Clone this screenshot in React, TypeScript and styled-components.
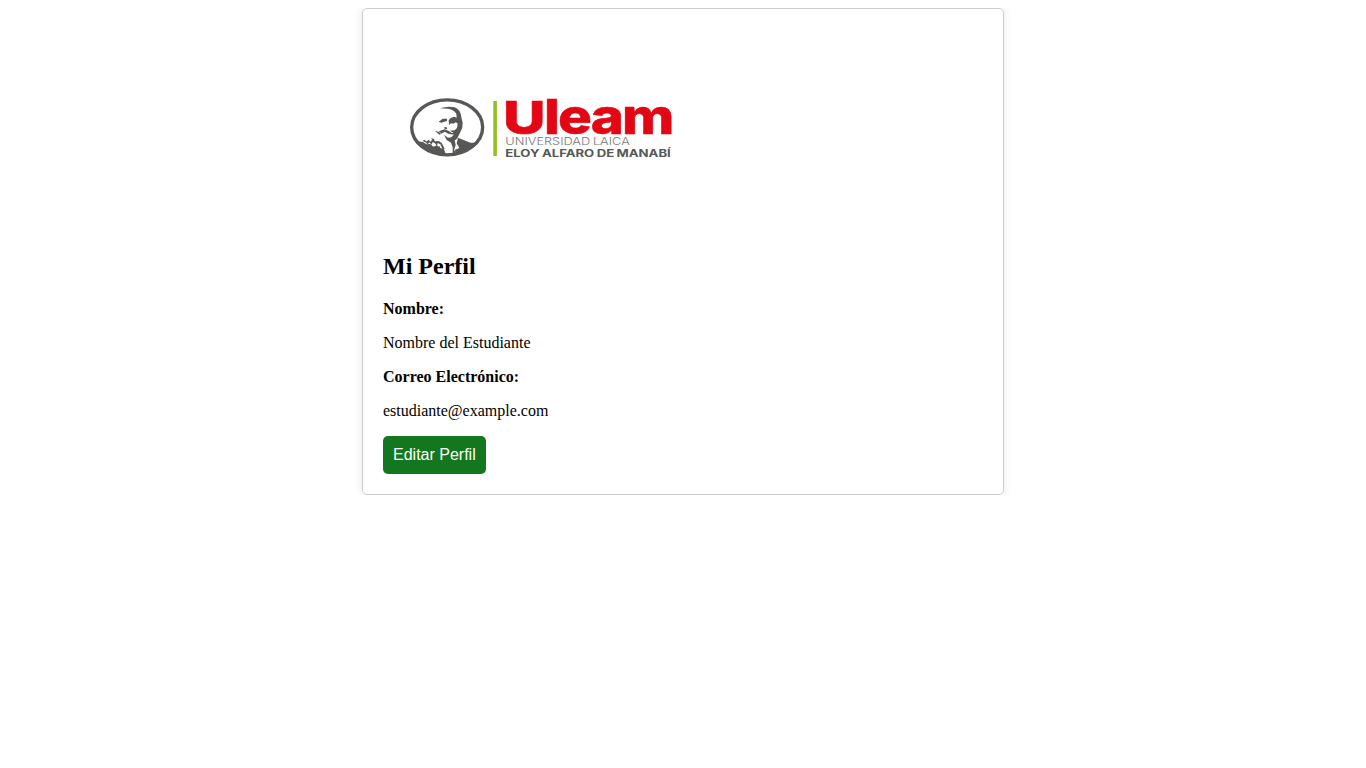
import React from "react";
import styled, { createGlobalStyle } from "styled-components";

const GlobalStyle = createGlobalStyle`
  body {
    margin: 8px;
    background: #fff;
    color: #000;
    font-family: "Liberation Serif", "Times New Roman", serif;
    font-size: 16px;
  }
`;

const Card = styled.main`
  width: 600px;
  margin: 0 auto;
  padding: 20px;
  border: 1px solid #ccc;
  border-radius: 5px;
  box-shadow: 0 0 10px rgba(0, 0, 0, 0.1);
`;

const Logo = styled.svg`
  display: block;
  width: 320px;
  height: 204px;
`;

const Title = styled.h2`
  margin: 20px 0;
  font-size: 24px;
  line-height: 27px;
`;

const Line = styled.p`
  margin: 16px 0;
  line-height: 18px;
`;

const Label = styled(Line)`
  font-weight: bold;
`;

const EditButton = styled.button`
  display: block;
  height: 38px;
  padding: 10px;
  border: none;
  border-radius: 5px;
  background: #13771f;
  color: #fff;
  font-family: "Liberation Sans", Arial, sans-serif;
  font-size: 16px;
  line-height: 18px;
  cursor: pointer;
`;

function UleamLogo() {
  return (
    <Logo viewBox="0 0 320 204" role="img" aria-label="Uleam">
      <g transform="translate(17 61) scale(0.33333)" fill="#575756">
        <ellipse cx="141.500" cy="112" rx="106.500" ry="82.500" fill="none" stroke="#575756" strokeWidth="10" />
        {/* hair and the shaded side of the head */}
        <path d="M120 55 Q142 47 164 52 Q182 59 184 82 L188 98 Q189 114 181 126 L172 145 L163 152 L164 134 L158 127 L149 122 L164 121 L171 114 L173 101 L168 97 L160 101 L153 100 L147 105 L146 91 L151 85 L162 80 L170 83 L169 72 Q164 60 144 56 Z" />
        {/* brows, eyes, nose and moustache */}
        <path d="M116 95 L128 86 L141 86 L141 93 L131 96 L124 98 Z" />
        <path d="M133 111 L140 112 L142 118 L134 117 Z" />
        <path d="M117 124 L133 118 L145 122 L154 128 L163 130 L166 135 L145 131 L134 125 L124 131 Z" />
        <path d="M105 123 L116 125 L122 130 L120 135 L115 131 Z" />
        {/* chin, collar and jacket */}
        <path d="M132 134 L144 143 L154 142 L164 132 L172 138 L164 151 L167 165 L162 181 L169 187 L158 191 L158 172 L153 158 L140 150 Z" />
        <path d="M174 143 L185 148 L211 158 L226 158 Q202 185 169 192 L164 180 L178 174 L170 160 Z" />
        <path d="M55 154 L70 157 L79 163 L91 162 L100 170 L111 166 L121 174 L132 177 L138 195 Q89 193 55 154 Z" />
        {/* laurel branch */}
        <path d="M67 153 L74 149 L79 155 L86 149 L91 155 L98 148 L106 154 L116 153 L125 159 L130 168 L134 177 L127 176 L121 163 L113 159 L111 168 L105 160 L98 156 L95 164 L88 157 L83 163 L75 156 Z" />
        <path d="M93 144 L104 148 L99 152 Z M112 174 L118 168 L122 177 Z" />
      </g>
      <rect x="110.300" y="72" width="3.600" height="55" fill="#95c11f" />
      <text y="105.300" fill="#e30613" stroke="#e30613" strokeWidth="0.500" fontFamily="Inter, sans-serif" fontWeight="800">
        <tspan x="120" textLength="42.500" lengthAdjust="spacingAndGlyphs" fontSize="45.500">U</tspan>
        <tspan x="161" textLength="128.500" lengthAdjust="spacingAndGlyphs" letterSpacing="-1.600" fontSize="48.500">leam</tspan>
      </text>
      <text x="122.300" y="116" textLength="124.500" lengthAdjust="spacingAndGlyphs" wordSpacing="-0.700" fill="#777" fontFamily="Inter, sans-serif" fontWeight="300" fontSize="10">UNIVERSIDAD LAICA</text>
      <text x="122.300" y="127.500" textLength="165.500" lengthAdjust="spacingAndGlyphs" wordSpacing="-0.500" fill="#575756" fontFamily="Inter, sans-serif" fontWeight="650" fontSize="9.800">ELOY ALFARO DE MANABÍ</text>
    </Logo>
  );
}

export default function App() {
  return (
    <>
      <GlobalStyle />
      <Card>
        <UleamLogo />
        <Title>Mi Perfil</Title>
        <Label>Nombre:</Label>
        <Line>Nombre del Estudiante</Line>
        <Label>Correo Electrónico:</Label>
        <Line>estudiante@example.com</Line>
        <EditButton type="button">Editar Perfil</EditButton>
      </Card>
    </>
  );
}
